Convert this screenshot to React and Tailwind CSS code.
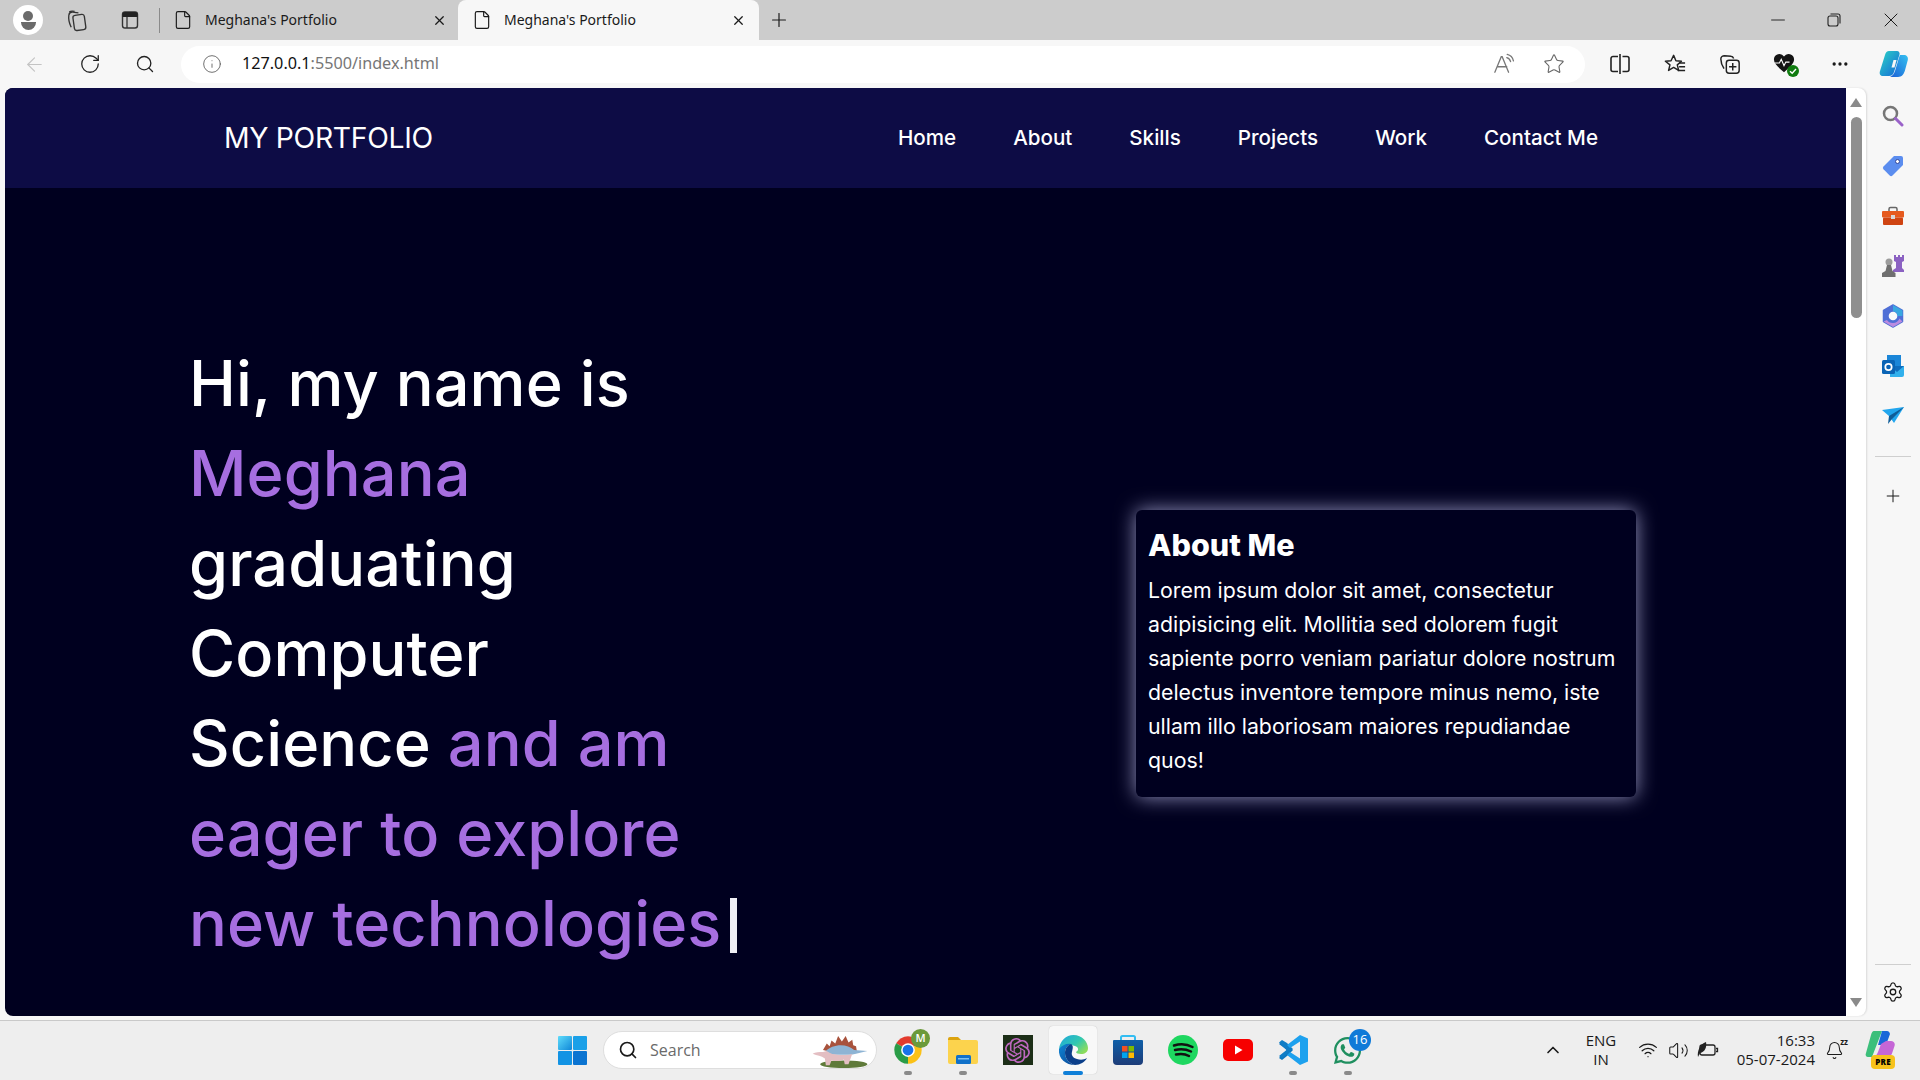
import React from 'react';
import {
  ArrowLeft, RotateCw, Search, Info, Star, X, Plus, File, MoreHorizontal, Minus,
  Settings, Wifi, Volume2, ChevronUp, Bell,
} from 'lucide-react';
import { SiOpenai } from 'react-icons/si';
import { FaWhatsapp } from 'react-icons/fa';

const navLinks = ['Home', 'About', 'Skills', 'Projects', 'Work', 'Contact Me'];

const Slot = ({ className = 'w-[55px]', children }) => (
  <div className={`relative flex h-full shrink-0 items-center justify-center ${className}`}>{children}</div>
);

const Collections = ({ size = 23 }) => (
  <svg width={size} height={size} viewBox="0 0 24 24" fill="none" stroke="#333" strokeWidth="1.4">
    <rect x="9" y="6" width="12" height="16" rx="2.5" transform="rotate(-8 15 14)" />
    <path d="M6.5 19C4.5 15 3.5 10 4 6.500 4.3 4.500 6 3 8 3.200l6 .8" />
    <path d="M10 2.500c-2-.5-4-.5-5.500.5" />
  </svg>
);

const PanelIcon = () => (
  <svg width="20" height="20" viewBox="0 0 20 20" fill="none">
    <rect x="2.500" y="2" width="15" height="16" rx="2.500" stroke="#333" strokeWidth="1.400" />
    <path d="M2.500 4.500A2.500 2.500 0 0 1 5 2h10a2.500 2.500 0 0 1 2.500 2.500V7h-15z" fill="#222" />
    <path d="M7 7v11" stroke="#333" strokeWidth="1.300" />
  </svg>
);

const ReadAloud = () => (
  <svg width="22" height="22" viewBox="0 0 24 24" fill="none" stroke="#777" strokeWidth="1.400" strokeLinecap="round">
    <path d="M2 21 9 4h1l7 17M5 15h10" />
    <path d="M15 5c2.200.6 3.600 2.200 4.200 4.400M15.500 1.500c3.600.8 6 3.400 6.800 7" />
  </svg>
);

const SplitIcon = () => (
  <svg width="22" height="22" viewBox="0 0 22 22" fill="none" stroke="#222" strokeWidth="1.600">
    <path d="M9 3.500H4A2 2 0 0 0 2 5.500v11a2 2 0 0 0 2 2h5M13.500 3.500H18a2 2 0 0 1 2 2v11a2 2 0 0 1-2 2h-4.500" />
    <path d="M11 1v20" />
  </svg>
);

const FavList = () => (
  <svg width="22" height="22" viewBox="0 0 24 24" fill="none" stroke="#222" strokeWidth="1.600" strokeLinejoin="round">
    <path d="M10.500 2.500 13 8.500l6 .5-4.500 4 1.500 6-5.500-3.300L5 19l1.500-6L1.500 9l6.200-.5z" />
    <path d="M16.500 11H23M16.500 15H23M15 19h8" />
  </svg>
);

const CollectionsAdd = () => (
  <svg width="22" height="22" viewBox="0 0 24 24" fill="none" stroke="#222" strokeWidth="1.600">
    <path d="M5.500 17C3.500 14 2 10 2 6.500 2 4 4 3 6 3l7 .5c1.500 0 2.500 1 3 2.500" />
    <rect x="8" y="8" width="14" height="14" rx="3" />
    <path d="M15 11v8M11 15h8" />
  </svg>
);

const HeartBadge = () => (
  <div className="relative h-6 w-6">
    <svg width="22" height="22" viewBox="0 0 24 24" className="absolute left-0 top-0">
      <path d="M12 22C6 17 1 13 1 8a6 6 0 0 1 11-3 6 6 0 0 1 11 3c0 5-5 9-11 14z" fill="#141414" />
      <path d="M2 12h5l2-4 3 7 2-4h4" fill="none" stroke="#fff" strokeWidth="1.200" />
    </svg>
    <svg width="12" height="12" viewBox="0 0 12 12" className="absolute bottom-[-1px] right-[-2px]">
      <circle cx="6" cy="6" r="6" fill="#107c10" />
      <path d="M3 6.200 5.200 8.300 9 4" fill="none" stroke="#fff" strokeWidth="1.400" />
    </svg>
  </div>
);

const CopilotIcon = () => (
  <svg width="30" height="28" viewBox="0 0 30 28">
    <defs>
      <linearGradient id="cpA" x1="0" y1="0" x2="1" y2="1">
        <stop offset="0" stopColor="#2bd4c5" />
        <stop offset="1" stopColor="#1466d8" />
      </linearGradient>
      <linearGradient id="cpB" x1="1" y1="0" x2="0" y2="1">
        <stop offset="0" stopColor="#35c1f1" />
        <stop offset="1" stopColor="#1b5fd6" />
      </linearGradient>
    </defs>
    <path d="M10 1h8c2 0 3 2 2.500 3.500L15 22c-1 3-3 4-5 4H4c-2.500 0-4-2-3-5L6 5c.7-2.500 2-4 4-4z" fill="url(#cpA)" />
    <path d="M21 5h4c2.500 0 4.500 2 3.800 5l-3 11c-1 3-3 6-6.800 6h-8c2.500-1 4-3 5-6l3-10c.6-2.500 1.500-5 2-6z" fill="url(#cpB)" />
    <path d="M14.500 10h3l-2 7.500h-3z" fill="#f7f7f7" />
  </svg>
);

const SearchColor = () => (
  <svg width="22" height="22" viewBox="0 0 22 22" fill="none">
    <circle cx="8.500" cy="8.500" r="6.500" stroke="#767676" strokeWidth="2.500" />
    <path d="M13.500 13.500 20 20" stroke="#9a62c9" strokeWidth="3" strokeLinecap="round" />
  </svg>
);

const TagIcon = () => (
  <svg width="22" height="22" viewBox="0 0 22 22">
    <path d="M12 1h7a2 2 0 0 1 2 2v7L10.500 20.500a2 2 0 0 1-2.800 0l-6.200-6.200a2 2 0 0 1 0-2.800z" fill="#5b8def" />
    <circle cx="15.500" cy="6.500" r="2" fill="#fff" stroke="#33489c" strokeWidth="1" />
  </svg>
);

const ToolboxIcon = () => (
  <svg width="22" height="20" viewBox="0 0 22 20">
    <path d="M7 6V3a1.500 1.500 0 0 1 1.500-1.500h5A1.500 1.500 0 0 1 15 3v3" fill="none" stroke="#666" strokeWidth="1.500" />
    <rect x="0" y="5" width="22" height="6.500" rx="1" fill="#e65a1e" />
    <rect x="1" y="11.500" width="20" height="7.500" rx="1" fill="#cf4412" />
    <rect x="9" y="9" width="4" height="4" fill="#d8d8d8" />
  </svg>
);

const ChessIcon = () => (
  <svg width="24" height="24" viewBox="0 0 24 24">
    <path d="M14 1h2v2h2V1h2v2h2V1h2v6l-2 1v6l2 2v2H13v-2l3-2V8l-2-1z" fill="#8b62c2" transform="translate(-1 0)" />
    <circle cx="8" cy="8" r="3.500" fill="#9c9c9c" />
    <path d="M6 11h4l1.500 6 3 2v4H1v-4l3.500-2z" fill="#6f6f6f" />
  </svg>
);

const M365Icon = () => (
  <svg width="22" height="24" viewBox="0 0 22 24">
    <path d="M11 1 20.500 6.500v11L11 23 1.500 17.500v-11z" fill="#4f6fd6" stroke="#4f6fd6" strokeWidth="1.500" strokeLinejoin="round" />
    <path d="M11 1 20.500 6.500V12h-5c0-2.500-2-4.500-4.500-4.500z" fill="#39a8e0" />
    <path d="M1.500 17.500 11 23l9.500-5.500-3-3c-1 2.500-3.500 4.500-6.500 4.500-3 0-5-1-6-3z" fill="#bb8be0" />
    <circle cx="11" cy="12" r="4.300" fill="#fafafa" />
  </svg>
);

const OutlookIcon = () => (
  <svg width="22" height="22" viewBox="0 0 22 22">
    <rect x="5" y="0" width="14" height="11" fill="#1b86d8" />
    <path d="M8 11h14v9a2 2 0 0 1-2 2H8z" fill="#31b0ec" />
    <path d="M8 11 22 11 15 17z" fill="#0f6cbd" />
    <rect x="0" y="5" width="13" height="14" rx="1.500" fill="#0a64b5" />
    <circle cx="6.500" cy="12" r="3.200" fill="none" stroke="#fff" strokeWidth="1.700" />
  </svg>
);

const PlaneIcon = () => (
  <svg width="22" height="18" viewBox="0 0 22 18">
    <path d="M0 3 22 0 12 16 7 9z" fill="#22a6ee" />
    <path d="M22 0 7 9l-1 8 4-5z" fill="#0f5d99" />
  </svg>
);

const WinLogo = () => (
  <svg width="29" height="29" viewBox="0 0 29 29">
    <defs>
      <linearGradient id="winA" x1="0" y1="0" x2="1" y2="1">
        <stop offset="0" stopColor="#5fdcfb" />
        <stop offset="1" stopColor="#0f87d8" />
      </linearGradient>
    </defs>
    <rect x="0" y="0" width="14" height="14" rx="1" fill="url(#winA)" />
    <rect x="15" y="0" width="14" height="14" rx="1" fill="#1aa0e8" />
    <rect x="0" y="15" width="14" height="14" rx="1" fill="#1293e4" />
    <rect x="15" y="15" width="14" height="14" rx="1" fill="#0b74d1" />
  </svg>
);

const Dino = () => (
  <svg width="56" height="34" viewBox="0 0 58 36">
    <ellipse cx="33" cy="32" rx="25" ry="4" fill="#5f7a3a" />
    <path d="M11 17 15 10l3 3 2-6 4 3 3-8 4 6 4-6 3 7 4-3 1 6 3 1 1 6H20z" fill="#a8523c" />
    <path d="M14 18c6-7 22-9 30-1l14 1-12 3-5 1H20z" fill="#8eb4d4" />
    <path d="M0 21c3-2 7-2 11-2l4-1c3 3 10 5 24 4l3-1-4 11h-4l-1-5c-4 2-9 2-13 1l-2 5h-4l-1-7c-4-3-8-3-13-5z" fill="#e3bec2" />
  </svg>
);

const ChromeIcon = () => (
  <svg width="30" height="30" viewBox="0 0 24 24">
    <path d="M12 12 2.500 6.500A11 11 0 0 1 21.500 6.500z" fill="#e33b2e" />
    <path d="M12 12 21.500 6.500A11 11 0 0 1 12 23z" fill="#fbc116" />
    <path d="M12 12 12 23A11 11 0 0 1 2.500 6.500z" fill="#2a9c47" />
    <circle cx="12" cy="12" r="5.500" fill="#fff" />
    <circle cx="12" cy="12" r="4.300" fill="#1a73e8" />
  </svg>
);

const FolderIcon = () => (
  <svg width="30" height="28" viewBox="0 0 30 28">
    <path d="M0 3a2 2 0 0 1 2-2h8l3 3h-13z" fill="#dca30e" />
    <path d="M0 4h28a2 2 0 0 1 2 2v20a2 2 0 0 1-2 2H2a2 2 0 0 1-2-2z" fill="#fcd34d" />
    <rect x="8" y="19" width="15" height="9" rx="1.500" fill="#1171c9" />
    <rect x="10" y="22" width="11" height="1.500" fill="#7cc0f0" />
  </svg>
);

const EdgeIcon = () => (
  <svg width="30" height="30" viewBox="0 0 30 30">
    <defs>
      <linearGradient id="edgeA" x1="0" y1="0" x2="1" y2="0.700">
        <stop offset="0" stopColor="#1fa6e0" />
        <stop offset="0.600" stopColor="#31c8b0" />
        <stop offset="1" stopColor="#8ddc5c" />
      </linearGradient>
      <linearGradient id="edgeB" x1="0" y1="0" x2="0.800" y2="1">
        <stop offset="0" stopColor="#0f86d6" />
        <stop offset="1" stopColor="#0a4d9c" />
      </linearGradient>
    </defs>
    <path d="M1 14C2 6 8 0 15.500 0 24 0 30 7 30 13c0 4-3 6-7 6-3 0-5-1-5-2 2-1 3-3 1-5-4-3-13-2-18 2z" fill="url(#edgeA)" />
    <path d="M1 14c3-4 8-6 12-5-3 1-6 4-6 9 0 6 5 11 10 12C8 30 0 24 1 14z" fill="url(#edgeB)" />
    <path d="M13 9c-3 1-6 4-6 9 0 6 5 11 10 12 5 0 10-3 12-7-3 2-7 2-10 1-4-1-6-4-5-7 .5-3 2-6 -1-8z" fill="#0b3f8a" />
  </svg>
);

const StoreIcon = () => (
  <svg width="30" height="30" viewBox="0 0 30 30">
    <defs>
      <linearGradient id="storeA" x1="0" y1="0" x2="0" y2="1">
        <stop offset="0" stopColor="#0f5fa8" />
        <stop offset="1" stopColor="#1d3c78" />
      </linearGradient>
    </defs>
    <path d="M8 6V2.500A1.500 1.500 0 0 1 9.500 1h11A1.500 1.500 0 0 1 22 2.500V6" fill="none" stroke="#33bdf2" strokeWidth="2" />
    <path d="M0 6a1 1 0 0 1 1-1h28a1 1 0 0 1 1 1v20a4 4 0 0 1-4 4H4a4 4 0 0 1-4-4z" fill="url(#storeA)" />
    <rect x="9" y="11" width="5.500" height="5.500" fill="#f25022" />
    <rect x="15.500" y="11" width="5.500" height="5.500" fill="#7fba00" />
    <rect x="9" y="17.500" width="5.500" height="5.500" fill="#00a4ef" />
    <rect x="15.500" y="17.500" width="5.500" height="5.500" fill="#ffb900" />
  </svg>
);

const SpotifyIcon = () => (
  <svg width="30" height="30" viewBox="0 0 30 30">
    <circle cx="15" cy="15" r="15" fill="#1ed760" />
    <path d="M6 10.500c6-2 13-1.500 18.500 1.500M7 15c5.500-1.500 11-1 16 1.500M8 19.500c4.500-1 9-.8 13 1.500" fill="none" stroke="#111" strokeWidth="2.500" strokeLinecap="round" />
  </svg>
);

const YoutubeIcon = () => (
  <svg width="30" height="22" viewBox="0 0 30 22">
    <rect width="30" height="22" rx="5" fill="#f70000" />
    <path d="M12 6.500v9l7.500-4.500z" fill="#fff" />
  </svg>
);

const VscodeIcon = () => (
  <svg width="30" height="30" viewBox="0 0 30 30">
    <path d="M1 10 4 7.500 15 16 9 22l-5 4-3-2 8-8z" fill="#0c75bd" transform="translate(0 -1)" />
    <path d="M1 21 4 23.500 15 14 9 8 4 5 1 7.500 8.500 15z" fill="#0f7dc6" />
    <path d="M22 0 30 3.500v23L22 30 9 20l3-3 10 6.500V6.500L12 13 9 10z" fill="#1da1ee" />
  </svg>
);

const BatteryLeaf = () => (
  <svg width="22" height="18" viewBox="0 0 22 18" fill="none">
    <rect x="3" y="4" width="15" height="10" rx="2" stroke="#222" strokeWidth="1.300" />
    <path d="M19 7.500h1.500v3H19" stroke="#222" strokeWidth="1.300" />
    <path d="M1 16C0 10 3 3 9 1c1 5-1 10-6 11z" fill="#222" />
  </svg>
);

const App = () => {
  return (
    <div className="flex h-screen w-full flex-col overflow-hidden bg-[#f7f7f7] font-['Noto_Sans',sans-serif] text-[#1a1a1a]">
      {/* title bar */}
      <div className="flex h-10 shrink-0 items-center bg-[#cccccc]">
        <div className="ml-[13px] flex h-[30px] w-[30px] flex-col items-center justify-center rounded-full bg-white">
          <div className="h-[10px] w-[10px] rounded-full bg-[#6b6b6b]" />
          <div className="mt-[1px] h-[8px] w-[15px] rounded-b-full bg-[#6b6b6b]" />
        </div>
        <Slot className="ml-[11px] w-[44px]"><Collections /></Slot>
        <Slot className="ml-[10px] w-[44px]"><PanelIcon /></Slot>
        <div className="ml-[7px] h-[25px] w-px bg-[#8a8a8a]" />
        <div className="flex h-full w-[298px] items-center text-[14px]">
          <File size={20} strokeWidth={1.4} className="ml-[13px]" />
          <span className="ml-[12px] w-[227px] pb-[2px]">Meghana's Portfolio</span>
          <X size={15} strokeWidth={2} />
        </div>
        <div className="flex h-full w-[301px] items-center rounded-t-lg bg-[#f7f7f7] text-[14px]">
          <File size={20} strokeWidth={1.4} className="ml-[14px]" />
          <span className="ml-[12px] w-[227px] pb-[2px]">Meghana's Portfolio</span>
          <X size={15} strokeWidth={2} />
        </div>
        <Slot className="w-[40px]"><Plus size={22} strokeWidth={1.3} /></Slot>
        <div className="ml-auto flex h-full">
          <Slot className="w-[56px]"><Minus size={22} strokeWidth={1} /></Slot>
          <Slot className="w-[56px]">
            <svg width="14" height="14" viewBox="0 0 14 14" fill="none" stroke="#222" strokeWidth="1.100">
              <rect x="1" y="3" width="10" height="10" rx="2" />
              <path d="M3.500 1H11a2 2 0 0 1 2 2v7.500" />
            </svg>
          </Slot>
          <Slot className="w-[58px]"><X size={24} strokeWidth={1} /></Slot>
        </div>
      </div>

      {/* address toolbar */}
      <div className="flex h-12 shrink-0 items-center pl-[7px]">
        <Slot><ArrowLeft size={23} strokeWidth={1.2} className="text-[#c4c4c4]" /></Slot>
        <Slot><RotateCw size={22} strokeWidth={1.4} className="text-[#222]" /></Slot>
        <Slot><Search size={20} strokeWidth={1.6} className="text-[#222]" /></Slot>
        <div className="ml-[9px] flex h-[37px] w-[1404px] shrink-0 items-center rounded-full bg-white pl-[21px]">
          <Info size={20} strokeWidth={1} className="text-[#555]" />
          <span className="ml-[20px] pb-[2px] text-[16.200px] text-[#767676]"><span className="text-[#111]">127.0.0.1</span>:5500/index.html</span>
          <div className="ml-auto flex h-full pr-[6px]">
            <Slot className="w-[50px]"><ReadAloud /></Slot>
            <Slot className="w-[50px]"><Star size={22} strokeWidth={1.2} className="text-[#666]" /></Slot>
          </div>
        </div>
        <div className="ml-[7px] flex h-full">
          <Slot><SplitIcon /></Slot>
          <Slot><FavList /></Slot>
          <Slot><CollectionsAdd /></Slot>
          <Slot><HeartBadge /></Slot>
          <Slot><MoreHorizontal size={20} strokeWidth={2} /></Slot>
          <Slot className="w-[53px]"><CopilotIcon /></Slot>
        </div>
      </div>

      {/* browser body */}
      <div className="flex min-h-0 flex-1 pb-1 pl-[5px]">
        <div className="min-w-0 flex-1 overflow-hidden rounded-l-lg bg-[#00001f] font-['Inter',sans-serif] text-white">
          <nav className="flex h-[100px] items-center justify-between bg-[#0d0c45] pl-[219px] pr-[248px]">
            <div className="text-[28.300px] tracking-[-0.300px]">MY PORTFOLIO</div>
            <ul className="flex gap-[57px] text-[20.600px] font-medium">
              {navLinks.map(link => (
                <li key={link}>{link}</li>
              ))}
            </ul>
          </nav>
          <section className="flex h-[930px] items-center justify-between pl-[184px] pr-[210px]">
            <h1 className="w-[552px] text-[63px] font-medium leading-[90px] tracking-[0.100px]">
              Hi, my name is <span className="text-[#a66ee0]">Meghana</span> graduating Computer Science{' '}
              <span className="text-[#a66ee0]">and am eager to explore new technologies</span>
              <span className="ml-[9px] inline-block h-[55px] w-[7px] translate-y-[7px] bg-[#f0f0f5]" />
            </h1>
            <div className="w-[500px] rounded-md bg-[#00001f] px-3 pb-5 pt-3 shadow-[0_0_20px_rgba(210,210,255,0.7)]">
              <h2 className="text-[30.500px] font-extrabold leading-[45px]">About Me</h2>
              <p className="mt-[6px] text-[21.300px] font-normal leading-[34px]">
                Lorem ipsum dolor sit amet, consectetur adipisicing elit. Mollitia sed dolorem fugit sapiente porro veniam pariatur dolore nostrum delectus inventore tempore minus nemo, iste ullam illo laboriosam maiores repudiandae quos!
              </p>
            </div>
          </section>
        </div>

        {/* page scrollbar */}
        <div className="flex h-full w-[20px] shrink-0 flex-col items-center rounded-r-lg bg-white pt-[10px] pb-[9px] shadow-[1px_0_2px_rgba(0,0,0,0.12)]">
          <div className="h-0 w-0 border-x-[6px] border-b-[9px] border-x-transparent border-b-[#8a8a8a]" />
          <div className="mt-[10px] h-[201px] w-[11px] rounded-full bg-[#8f8f8f]" />
          <div className="mt-auto h-0 w-0 border-x-[6px] border-t-[9px] border-x-transparent border-t-[#8a8a8a]" />
        </div>

        {/* edge sidebar */}
        <div className="flex w-[54px] shrink-0 flex-col items-center pt-[3px]">
          {[<SearchColor />, <TagIcon />, <ToolboxIcon />, <ChessIcon />, <M365Icon />, <OutlookIcon />, <PlaneIcon />].map((icon, i) => (
            <div key={i} className="flex h-[50px] w-full items-center justify-center">{icon}</div>
          ))}
          <div className="mt-[15px] h-px w-[36px] bg-[#cfcfcf]" />
          <div className="mt-[14px] flex h-[50px] items-center justify-center"><Plus size={20} strokeWidth={1.2} /></div>
          <div className="mt-auto h-px w-[36px] bg-[#cfcfcf]" />
          <div className="mb-[4px] mt-[7px] flex h-[40px] items-center justify-center"><Settings size={22} strokeWidth={1.4} /></div>
        </div>
      </div>

      {/* windows taskbar */}
      <div className="flex h-[60px] shrink-0 items-center border-t border-[#c9c9c9] bg-[#eeeeee] pb-px pl-[558px] font-['Open_Sans',sans-serif]">
        <WinLogo />
        <div className="ml-[16px] flex h-[38px] w-[274px] items-center overflow-hidden rounded-full border border-[#dedede] bg-white pl-[14px]">
          <Search size={20} strokeWidth={2} />
          <span className="ml-[12px] text-[16px] text-[#6a6a6a]">Search</span>
          <div className="ml-auto mr-[8px] mt-[2px]"><Dino /></div>
        </div>
        <div className="ml-[3px] flex h-full">
          <Slot>
            <ChromeIcon />
            <div className="absolute left-[31px] top-[8px] flex h-[19px] w-[19px] items-center justify-center rounded-full bg-[#6b9a3a] text-[11px] font-semibold text-white">M</div>
            <div className="absolute bottom-[4px] h-[4px] w-[8px] rounded-full bg-[#8a8a8a]" />
          </Slot>
          <Slot>
            <FolderIcon />
            <div className="absolute bottom-[4px] h-[4px] w-[8px] rounded-full bg-[#8a8a8a]" />
          </Slot>
          <Slot>
            <div className="flex h-[30px] w-[30px] items-center justify-center bg-[#1c2e17]">
              <SiOpenai size={25} className="text-[#bd68bf]" />
            </div>
          </Slot>
          <Slot>
            <div className="absolute top-[5px] h-[48px] w-[48px] rounded bg-[#f8f8f8] shadow-[0_0_1px_rgba(0,0,0,0.25)]" />
            <div className="relative"><EdgeIcon /></div>
            <div className="absolute bottom-[4px] h-[4px] w-[20px] rounded-full bg-[#0f7fd8]" />
          </Slot>
          <Slot><StoreIcon /></Slot>
          <Slot><SpotifyIcon /></Slot>
          <Slot><YoutubeIcon /></Slot>
          <Slot>
            <VscodeIcon />
            <div className="absolute bottom-[4px] h-[4px] w-[8px] rounded-full bg-[#8a8a8a]" />
          </Slot>
          <Slot>
            <FaWhatsapp size={31} className="text-[#1f8f5f]" />
            <div className="absolute left-[29px] top-[8px] flex h-[22px] w-[22px] items-center justify-center rounded-full bg-[#0f7ad8] text-[13px] text-white">16</div>
            <div className="absolute bottom-[4px] h-[4px] w-[8px] rounded-full bg-[#8a8a8a]" />
          </Slot>
        </div>
        <div className="ml-auto flex h-full items-center">
          <ChevronUp size={20} strokeWidth={2} />
          <div className="ml-[13px] w-[50px] text-center text-[15px] leading-[19px]">
            <div>ENG</div>
            <div>IN</div>
          </div>
          <Slot className="ml-[7px] w-[30px]"><Wifi size={20} strokeWidth={1.5} /></Slot>
          <Slot className="w-[30px]"><Volume2 size={21} strokeWidth={1.2} /></Slot>
          <Slot className="w-[30px]"><BatteryLeaf /></Slot>
          <div className="w-[92px] text-right text-[15px] leading-[19px]">
            <div>16:33</div>
            <div>05-07-2024</div>
          </div>
          <div className="relative ml-[10px] w-[20px]">
            <Bell size={19} strokeWidth={1.3} />
            <span className="absolute right-[-3px] top-[-3px] text-[8px] font-bold leading-none">zz</span>
          </div>
          <div className="relative ml-[20px] mr-[25px] h-[38px] w-[30px]">
            <svg width="30" height="26" viewBox="0 0 30 26" className="absolute top-0">
              <path d="M9 0h8L7 26H3c-2 0-3-2-2-4L6 4c.5-2 1.500-4 3-4z" fill="#3cbf7b" />
              <path d="M17 0h5c1.500 0 2.500 1 3 3L21 14l-8 0z" fill="#1967d8" />
              <path d="M21 10h5c2.500 0 4.500 2 3.500 5l-2 6c-.7 3-2.500 5-5 5H7c3 0 5-2 6-5l3-8z" fill="#c566d6" />
            </svg>
            <div className="absolute bottom-[0px] left-[6px] flex h-[14px] w-[24px] items-center justify-center rounded-sm bg-[#f7c21b] text-[8px] font-extrabold tracking-wide text-black">PRE</div>
          </div>
        </div>
      </div>
    </div>
  );
};

export default App;
